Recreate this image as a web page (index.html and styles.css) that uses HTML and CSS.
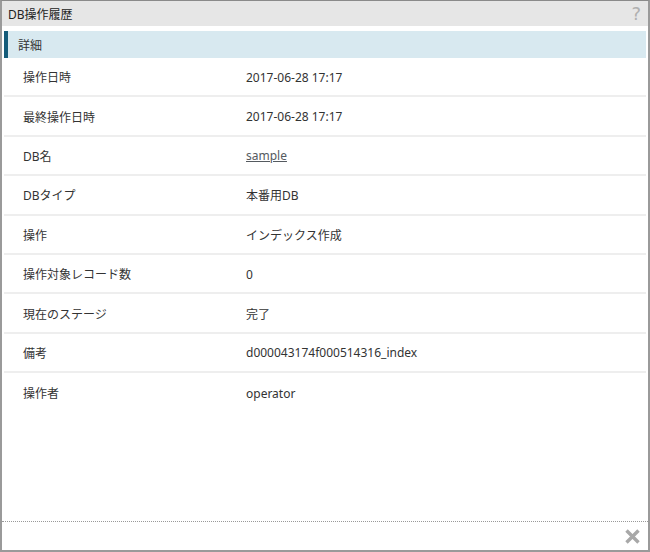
FILE: index.html
```html
<!DOCTYPE html>
<html lang="ja">
<head>
<meta charset="utf-8">
<title>DB操作履歴</title>
<link rel="stylesheet" href="styles.css">
</head>
<body>
<div class="dialog">
  <div class="titlebar">
    <span class="title">DB操作履歴</span>
    <span class="help">?</span>
  </div>
  <div class="content">
    <div class="section-head">詳細</div>
    <div class="rows">
      <div class="row"><div class="label">操作日時</div><div class="value">2017-06-28 17:17</div></div>
      <div class="row"><div class="label">最終操作日時</div><div class="value">2017-06-28 17:17</div></div>
      <div class="row"><div class="label">DB名</div><div class="value"><a class="link" href="#">sample</a></div></div>
      <div class="row"><div class="label">DBタイプ</div><div class="value">本番用DB</div></div>
      <div class="row"><div class="label">操作</div><div class="value">インデックス作成</div></div>
      <div class="row"><div class="label">操作対象レコード数</div><div class="value">0</div></div>
      <div class="row"><div class="label">現在のステージ</div><div class="value">完了</div></div>
      <div class="row"><div class="label">備考</div><div class="value">d000043174f000514316_index</div></div>
      <div class="row last"><div class="label">操作者</div><div class="value">operator</div></div>
    </div>
  </div>
  <div class="footer">
    <svg class="close" width="15" height="15" viewBox="0 0 15 15" aria-hidden="true">
      <path d="M1.5 1.5 L13.5 13.5 M13.5 1.5 L1.5 13.5" stroke="#a8a8a8" stroke-width="3.4" stroke-linecap="butt"/>
    </svg>
  </div>
</div>
</body>
</html>
```
FILE: styles.css
```css
html, body {
  margin: 0;
  padding: 0;
  background: #ffffff;
}
body {
  font-family: "Noto Sans", "Noto Sans CJK JP", "DejaVu Sans", sans-serif;
  font-size: 12px;
  color: #333333;
}
.dialog {
  width: 650px;
  height: 552px;
  box-sizing: border-box;
  border: 2px solid #9a9a9a;
  border-top: 1px solid #8a8a8a;
  display: flex;
  flex-direction: column;
  background: #ffffff;
}
.titlebar {
  height: 25px;
  background: #e6e6e6;
  display: flex;
  align-items: center;
  justify-content: space-between;
  padding: 0 7px 0 6px;
  flex: none;
}
.title {
  font-size: 12px;
  color: #222222;
}
.help {
  font-family: "DejaVu Sans", sans-serif;
  font-size: 18px;
  color: #b0b0b0;
  line-height: 1;
  margin-top: 1px;
}
.content {
  flex: 1;
  padding: 5px 2px 0 2px;
  display: flex;
  flex-direction: column;
}
.section-head {
  height: 27px;
  background: #d8e9f0;
  border-left: 4px solid #145c7a;
  display: flex;
  align-items: center;
  padding-left: 10px;
  color: #333333;
  flex: none;
}
.rows {
  display: flex;
  flex-direction: column;
}
.row {
  height: 39.4px;
  box-sizing: border-box;
  border-bottom: 2px solid #eeeeee;
  display: flex;
  align-items: center;
  padding-top: 1px;
}
.row.last {
  border-bottom: none;
}
.label {
  width: 223px;
  padding-left: 19px;
  flex: none;
}
.value {
  flex: 1;
}
.link {
  color: #555a60;
  text-decoration: underline;
}
.footer {
  height: 28px;
  border-top: 1px dotted #999999;
  display: flex;
  align-items: center;
  justify-content: flex-end;
  padding-right: 8px;
  flex: none;
}
.close {
  display: block;
  margin-top: 1px;
}
```
